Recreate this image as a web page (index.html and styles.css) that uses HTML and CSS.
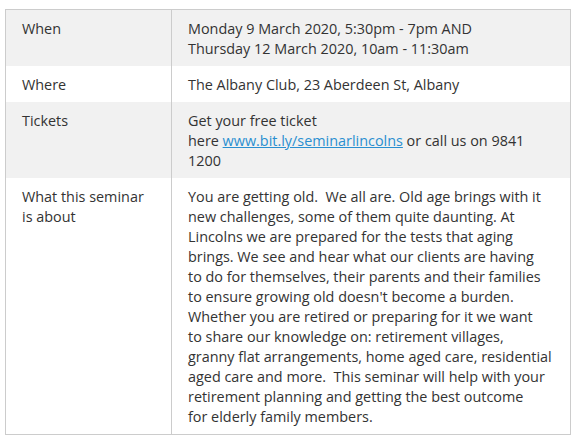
FILE: index.html
```html
<!DOCTYPE html>
<html lang="en">
<head>
<meta charset="utf-8">
<title>Seminar</title>
<link rel="stylesheet" href="styles.css">
</head>
<body>
<table class="info">
  <colgroup><col class="col-label"><col class="col-value"></colgroup>
  <tbody>
    <tr class="shaded">
      <td>When</td>
      <td>Monday 9 March 2020, 5:30pm - 7pm AND<br>Thursday 12 March 2020, 10am - 11:30am</td>
    </tr>
    <tr>
      <td>Where</td>
      <td>The Albany Club, 23 Aberdeen St, Albany</td>
    </tr>
    <tr class="shaded">
      <td>Tickets</td>
      <td>Get your free ticket<br>here <a href="#">www.bit.ly/seminarlincolns</a> or call us on 9841 1200</td>
    </tr>
    <tr>
      <td>What this seminar is about</td>
      <td class="lines">You are getting old.&nbsp; We all are. Old age brings with it<br>
new challenges, some of them quite daunting. At<br>
Lincolns we are prepared for the tests that aging<br>
brings. We see and hear what our clients are having<br>
to do for themselves, their parents and their families<br>
to ensure growing old doesn't become a burden.<br>
Whether you are retired or preparing for it we want<br>
to share our knowledge on: retirement villages,<br>
granny flat arrangements, home aged care, residential<br>
aged care and more.&nbsp; This seminar will help with your<br>
retirement planning and getting the best outcome<br>
for elderly family members.</td>
    </tr>
  </tbody>
</table>
</body>
</html>
```
FILE: styles.css
```css
body {
  margin: 0;
  padding: 9px 0 0 5px;
  background: #fff;
  font-family: "Open Sans", "Noto Sans", sans-serif;
  font-size: 14.4px;
  line-height: 20px;
  color: #333;
}
.info {
  border-collapse: collapse;
  table-layout: fixed;
  width: 566px;
  border: 1px solid #ccc;
}
.col-label { width: 166px; }
.info td {
  padding: 9px 16px 7px;
  vertical-align: top;
  border-left: 1px solid #ccc;
}
.info td.lines { white-space: nowrap; }
.info tr.shaded td { background: #f1f1f1; }
.info a { color: #2a8fd0; text-decoration: underline; }
```
